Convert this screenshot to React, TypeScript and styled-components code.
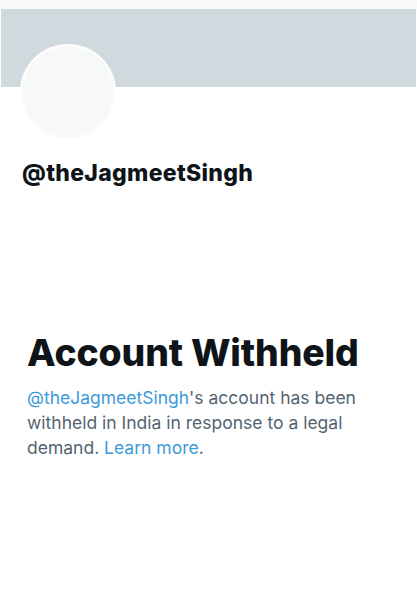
import styled, { createGlobalStyle } from 'styled-components';

const GlobalStyle = createGlobalStyle`
  html, body {
    margin: 0;
    padding: 0;
    background: #ffffff;
  }
  body {
    font-family: 'Inter', 'Liberation Sans', sans-serif;
  }
`;

const Page = styled.div`
  width: 417px;
  height: 600px;
  background: #ffffff;
  display: flex;
  flex-direction: column;
`;

const TopStrip = styled.div`
  height: 9px;
  background: #f7f9fa;
`;

const Header = styled.div`
  position: relative;
  height: 78px;
  margin: 0 1px;
  background: #cfd9de;
`;

const Avatar = styled.div`
  position: absolute;
  left: 19px;
  top: 35px;
  width: 92px;
  height: 92px;
  border-radius: 50%;
  background: #f7f9f9;
  border: 2px solid #ffffff;
`;

const Handle = styled.div`
  margin: 72px 0 0 22px;
  font-size: 23px;
  font-weight: 800;
  color: #0f1419;
  letter-spacing: 0.3px;
`;

const Notice = styled.div`
  margin: 144px 0 0 27px;
  padding-right: 24px;
`;

const Title = styled.h1`
  margin: 0;
  font-size: 37.3px;
  font-weight: 800;
  line-height: 44px;
  color: #0f1419;
  letter-spacing: -0.1px;
`;

const Body = styled.p`
  margin: 10px 0 0;
  font-size: 17.5px;
  line-height: 25px;
  color: #536471;
`;

const Link = styled.a`
  color: #3c9ad8;
  text-decoration: none;
`;

export default function App() {
  return (
    <>
      <GlobalStyle />
      <Page>
        <TopStrip />
        <Header>
          <Avatar />
        </Header>
        <Handle>@theJagmeetSingh</Handle>
        <Notice>
          <Title>Account Withheld</Title>
          <Body>
            <Link href="#">@theJagmeetSingh</Link>'s account has been withheld in India in response to a legal demand.{' '}
            <Link href="#">Learn more</Link>.
          </Body>
        </Notice>
      </Page>
    </>
  );
}
